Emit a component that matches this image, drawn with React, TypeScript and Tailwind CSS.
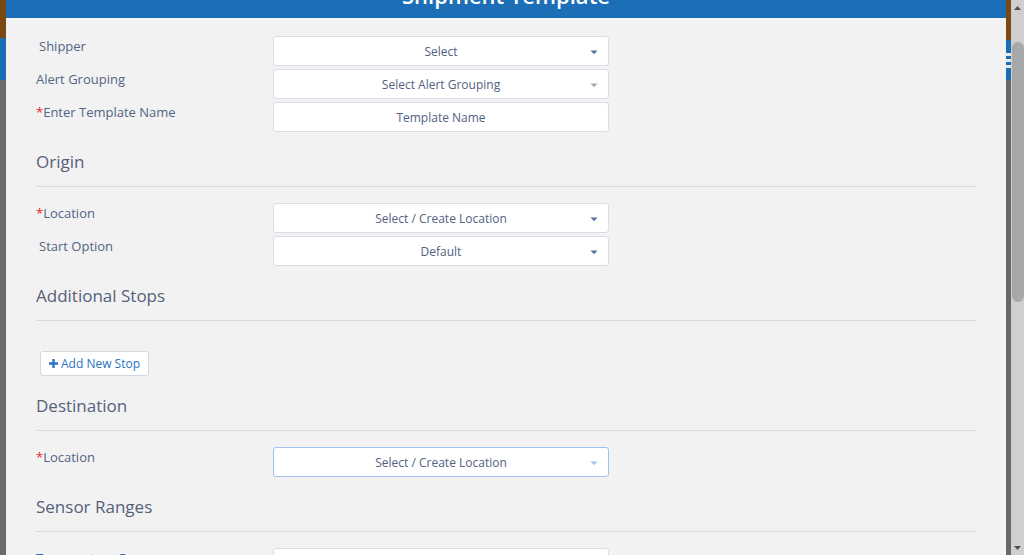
import React from "react";

const Caret = ({ color }: { color: string }) => (
  <svg width="8" height="5" viewBox="0 0 8 5" className="absolute right-[10px] top-[13px]">
    <path d="M0.5 0.5 L7.5 0.5 L4 4.3 Z" fill={color} />
  </svg>
);

const SelectBox = ({
  text,
  caret = "#56729f",
  focused = false,
  noCaret = false,
}: {
  text: string;
  caret?: string;
  focused?: boolean;
  noCaret?: boolean;
}) => (
  <div
    className={`relative w-[336px] h-[30px] shrink-0 bg-white rounded-[3px] border flex items-center justify-center pt-[2px] text-[12px] text-[#52617f] ${
      focused ? "border-[#9dc2f3]" : "border-[#d9dee6]"
    }`}
  >
    <span>{text}</span>
    {!noCaret && <Caret color={caret} />}
  </div>
);

const Label = ({ text, req = false, indent = false }: { text: string; req?: boolean; indent?: boolean }) => (
  <div className={`w-[237px] shrink-0 text-[13px] leading-[20px] text-[#536486] ${indent ? "pl-[3px]" : ""}`}>
    {req && <span className="text-[#ee2222]">*</span>}
    {text}
  </div>
);

const Row = ({ children }: { children: React.ReactNode }) => <div className="flex mb-[3px] shrink-0">{children}</div>;

const Section = ({ title }: { title: string }) => (
  <div className="mt-[15px] pb-[12px] border-b border-[#d9d9d9] mb-[16px] shrink-0">
    <div className="text-[17px] leading-[24px] text-[#55617a]">{title}</div>
  </div>
);

export default function App() {
  return (
    <div
      className="w-[1024px] h-[555px] flex overflow-hidden bg-[#6a6a6a]"
      style={{ fontFamily: '"Open Sans", "Noto Sans", sans-serif' }}
    >
      <div className="w-[6px] shrink-0 flex flex-col">
        <div className="h-[38px] shrink-0 bg-[#7b4a14]" />
        <div className="h-[42px] shrink-0 bg-[#1c6db3]" />
        <div className="flex-1 bg-[#6b6b6b]" />
      </div>

      <div className="w-[1000px] shrink-0 flex flex-col bg-[#f2f2f2] overflow-hidden">
        <div className="h-[18px] shrink-0 bg-[#1c6fb6] overflow-hidden flex justify-center">
          <div className="text-white text-[22px] leading-[30px] mt-[-20px] font-semibold whitespace-nowrap">
            Shipment Template
          </div>
        </div>
        <div className="px-[30px] pt-[18px] flex flex-col">
          <Row>
            <Label text="Shipper" indent />
            <SelectBox text="Select" />
          </Row>
          <Row>
            <Label text="Alert Grouping" />
            <SelectBox text="Select Alert Grouping" caret="#a9a9a9" />
          </Row>
          <Row>
            <Label text="Enter Template Name" req />
            <SelectBox text="Template Name" noCaret />
          </Row>

          <Section title="Origin" />
          <Row>
            <Label text="Location" req />
            <SelectBox text="Select / Create Location" />
          </Row>
          <Row>
            <Label text="Start Option" indent />
            <SelectBox text="Default" />
          </Row>

          <Section title="Additional Stops" />
          <div className="pt-[14px] pl-[4px] mb-[3px] shrink-0">
            <button className="h-[25px] px-[8px] bg-white border border-[#d3d9e3] rounded-[3px] text-[12px] text-[#2b72c2] flex items-center gap-[3px]">
              <svg width="9" height="9" viewBox="0 0 9 9">
                <path d="M3.3 0 H5.7 V3.3 H9 V5.7 H5.7 V9 H3.3 V5.7 H0 V3.3 H3.3 Z" fill="#2b72c2" />
              </svg>
              Add New Stop
            </button>
          </div>

          <Section title="Destination" />
          <Row>
            <Label text="Location" req />
            <SelectBox text="Select / Create Location" caret="#aac6ee" focused />
          </Row>

          <Section title="Sensor Ranges" />
          <Row>
            <div className="w-[237px] shrink-0 text-[13px] leading-[20px] text-[#3a68ad]">Temperature Range</div>
            <SelectBox text="" noCaret />
          </Row>
        </div>
      </div>

      <div className="w-[5px] shrink-0 flex flex-col">
        <div className="h-[40px] shrink-0 bg-[#7b4a14]" />
        <div className="h-[40px] shrink-0 bg-[#1c6db3] flex flex-col justify-center gap-[3px]">
          <div className="h-[3px] bg-[#e8e8e8]" />
          <div className="h-[3px] bg-[#e8e8e8]" />
          <div className="h-[3px] bg-[#e8e8e8]" />
        </div>
        <div className="flex-1 bg-[#686868]" />
      </div>

      <div className="w-[13px] shrink-0 bg-[#cfcfcf] flex flex-col items-center">
        <div className="h-[15px] shrink-0 flex items-center justify-center">
          <svg width="7" height="4" viewBox="0 0 7 4">
            <path d="M0 4 L7 4 L3.5 0 Z" fill="#505050" />
          </svg>
        </div>
        <div className="mt-[27px] w-[12px] h-[260px] shrink-0 rounded-[6px] bg-[#a8a8a8]" />
        <div className="flex-1" />
        <div className="h-[15px] shrink-0 flex items-center justify-center">
          <svg width="7" height="4" viewBox="0 0 7 4">
            <path d="M0 0 L7 0 L3.5 4 Z" fill="#505050" />
          </svg>
        </div>
      </div>
    </div>
  );
}
